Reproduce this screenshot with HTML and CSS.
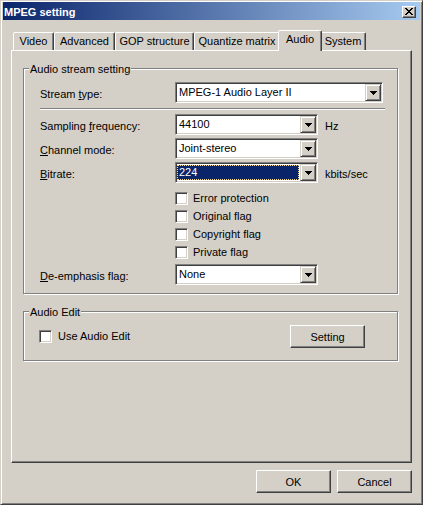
FILE: index.html
```html
<!DOCTYPE html>
<html>
<head>
<meta charset="utf-8">
<link rel="stylesheet" href="styles.css">
</head>
<body>
<div class="window">
  <div class="titlebar">
    <span class="title">MPEG setting</span>
    <span class="close-btn">
      <svg width="8" height="7" viewBox="0 0 8 7" shape-rendering="crispEdges"><path d="M0 0h2v1H0zM6 0h2v1H6zM1 1h2v1H1zM5 1h2v1H5zM2 2h4v1H2zM3 3h2v1H3zM2 4h4v1H2zM1 5h2v1H1zM5 5h2v1H5zM0 6h2v1H0zM6 6h2v1H6z" fill="#000"/></svg>
    </span>
  </div>
  <div class="client">
    <div class="tabs">
      <div class="tab tab-video">Video</div>
      <div class="tab tab-advanced">Advanced</div>
      <div class="tab tab-gop">GOP structure</div>
      <div class="tab tab-quantize">Quantize matrix</div>
      <div class="tab tab-audio tab-selected">Audio</div>
      <div class="tab tab-system">System</div>
    </div>
    <div class="panel">
      <div class="group group-stream">
        <div class="group-title">Audio stream setting</div>
        <div class="field-row row-stream">
          <span class="field-label">Stream <u>t</u>ype:</span>
          <div class="combo combo-wide">
            <span class="combo-value">MPEG-1 Audio Layer II</span>
            <span class="combo-btn"><svg width="7" height="4" viewBox="0 0 7 4" shape-rendering="crispEdges"><path d="M0 0h7v1H0zM1 1h5v1H1zM2 2h3v1H2zM3 3h1v1H3z" fill="#000"/></svg></span>
          </div>
        </div>
        <div class="separator"></div>
        <div class="field-row row-after-sep">
          <span class="field-label">Sampling <u>f</u>requency:</span>
          <div class="combo">
            <span class="combo-value">44100</span>
            <span class="combo-btn"><svg width="7" height="4" viewBox="0 0 7 4" shape-rendering="crispEdges"><path d="M0 0h7v1H0zM1 1h5v1H1zM2 2h3v1H2zM3 3h1v1H3z" fill="#000"/></svg></span>
          </div>
          <span class="unit">Hz</span>
        </div>
        <div class="field-row">
          <span class="field-label"><u>C</u>hannel mode:</span>
          <div class="combo">
            <span class="combo-value">Joint-stereo</span>
            <span class="combo-btn"><svg width="7" height="4" viewBox="0 0 7 4" shape-rendering="crispEdges"><path d="M0 0h7v1H0zM1 1h5v1H1zM2 2h3v1H2zM3 3h1v1H3z" fill="#000"/></svg></span>
          </div>
        </div>
        <div class="field-row">
          <span class="field-label"><u>B</u>itrate:</span>
          <div class="combo combo-focus">
            <span class="combo-value">224</span>
            <span class="combo-btn"><svg width="7" height="4" viewBox="0 0 7 4" shape-rendering="crispEdges"><path d="M0 0h7v1H0zM1 1h5v1H1zM2 2h3v1H2zM3 3h1v1H3z" fill="#000"/></svg></span>
          </div>
          <span class="unit">kbits/sec</span>
        </div>
        <div class="checks">
          <div class="check-row"><span class="check"></span><span class="check-text">Error protection</span></div>
          <div class="check-row"><span class="check"></span><span class="check-text">Original flag</span></div>
          <div class="check-row"><span class="check"></span><span class="check-text">Copyright flag</span></div>
          <div class="check-row"><span class="check"></span><span class="check-text">Private flag</span></div>
        </div>
        <div class="field-row row-deemph">
          <span class="field-label"><u>D</u>e-emphasis flag:</span>
          <div class="combo">
            <span class="combo-value">None</span>
            <span class="combo-btn"><svg width="7" height="4" viewBox="0 0 7 4" shape-rendering="crispEdges"><path d="M0 0h7v1H0zM1 1h5v1H1zM2 2h3v1H2zM3 3h1v1H3z" fill="#000"/></svg></span>
          </div>
        </div>
      </div>
      <div class="group group-edit">
        <div class="group-title">Audio Edit</div>
        <div class="edit-row">
          <div class="check-row check-row-edit"><span class="check"></span><span class="check-text">Use Audio Edit</span></div>
          <button class="btn btn-setting">Setting</button>
        </div>
      </div>
    </div>
    <div class="buttons">
      <button class="btn">OK</button>
      <button class="btn">Cancel</button>
    </div>
  </div>
</div>
</body>
</html>
```
FILE: styles.css
```css
body {
  margin: 0;
  font-family: "Liberation Sans", Arial, sans-serif;
  font-size: 11px;
  color: #000;
  background: #D4D0C8;
}

.window {
  width: 423px;
  height: 505px;
  box-sizing: border-box;
  border: 1px solid;
  border-color: #D4D0C8 #404040 #404040 #D4D0C8;
  box-shadow: inset 1px 1px #fff, inset -1px -1px #808080;
  padding: 1px 2px 2px 2px;
  background: #D4D0C8;
  display: flex;
  flex-direction: column;
}

.titlebar {
  height: 18px;
  flex: none;
  display: flex;
  align-items: center;
  justify-content: space-between;
  padding: 0 4px 0 1px;
  background: linear-gradient(90deg, #0A246A, #A6CAF0);
  color: #fff;
  font-weight: bold;
}

.title {
  line-height: 13px;
  padding-top: 2px;
}

.close-btn {
  width: 14px;
  height: 12px;
  box-sizing: border-box;
  background: #D4D0C8;
  border: 1px solid;
  border-color: #fff #404040 #404040 #fff;
  box-shadow: inset -1px -1px #808080;
  display: flex;
  align-items: center;
  justify-content: center;
  margin-top: 1px;
}

.close-btn svg {
  display: block;
}

.client {
  flex: 1;
  padding: 10px 8px 0 8px;
  display: flex;
  flex-direction: column;
}

.tabs {
  display: flex;
  align-items: flex-end;
  height: 20px;
  padding-left: 2px;
}

.tab {
  box-sizing: border-box;
  height: 18px;
  flex: none;
  border: 1px solid;
  border-bottom: 0;
  border-color: #fff #404040 transparent #fff;
  box-shadow: inset -1px 0 #808080;
  border-radius: 2px 2px 0 0;
  text-align: center;
  padding-top: 2px;
  line-height: 13px;
  background: #D4D0C8;
}

.tab-selected {
  height: 21px;
  margin: 0 -2px -1px -2px;
  position: relative;
  z-index: 1;
}

.tab-video { width: 41px; }
.tab-advanced { width: 61px; }
.tab-gop { width: 79px; }
.tab-quantize { width: 86px; }
.tab-audio { width: 44px; }
.tab-system { width: 46px; }

.panel {
  height: 413px;
  box-sizing: border-box;
  flex: none;
  border: 1px solid;
  border-color: #fff #404040 #404040 #fff;
  box-shadow: inset -1px -1px #808080;
  padding-top: 17px;
}

.group {
  margin: 0 13px 0 11px;
  border: 1px solid #808080;
  box-shadow: inset 1px 1px #fff, 1px 1px #fff;
}

.group-stream {
  padding: 0 12px 8px 16px;
}

.group-edit {
  margin-top: 17px;
  padding: 0 32px 12px 15px;
}

.group-title {
  width: max-content;
  margin: -6px 0 0 -11px;
  padding: 0 1px;
  background: #D4D0C8;
  line-height: 13px;
}

.group-edit .group-title {
  margin-left: -10px;
}

.field-row {
  display: flex;
  align-items: center;
  height: 21px;
  margin-top: 3px;
}

.row-stream { margin-top: 6px; }
.row-after-sep { margin-top: 4px; }
.row-deemph { margin-top: 5px; }

.separator {
  margin-top: 5px;
  border-top: 1px solid #808080;
  border-bottom: 1px solid #fff;
}

.field-label {
  width: 135px;
  flex: none;
  padding-top: 3px;
  line-height: 13px;
}

.unit {
  margin-left: 7px;
  padding-top: 3px;
  line-height: 13px;
}

.combo {
  display: flex;
  box-sizing: border-box;
  height: 21px;
  width: 143px;
  flex: none;
  border: 1px solid;
  border-color: #808080 #fff #fff #808080;
  box-shadow: inset 1px 1px #404040, inset -1px -1px #D4D0C8;
  padding: 1px;
  background: #fff;
}

.combo-wide {
  width: 208px;
}

.combo-value {
  flex: 1;
  line-height: 17px;
  padding-left: 2px;
  white-space: nowrap;
  overflow: hidden;
}

.combo-focus .combo-value {
  margin: 1px 1px 1px 0;
  padding-left: 1px;
  line-height: 13px;
  background: #0A246A;
  color: #fff;
  border: 1px dotted #F5DB95;
}

.combo-btn {
  width: 16px;
  height: 17px;
  box-sizing: border-box;
  flex: none;
  background: #D4D0C8;
  border: 1px solid;
  border-color: #D4D0C8 #404040 #404040 #D4D0C8;
  box-shadow: inset 1px 1px #fff, inset -1px -1px #808080;
  display: flex;
  align-items: center;
  justify-content: center;
}

.combo-btn svg {
  display: block;
}

.checks {
  margin: 9px 0 0 135px;
  display: flex;
  flex-direction: column;
  gap: 5px;
}

.check-row {
  display: flex;
  align-items: center;
  gap: 5px;
  height: 13px;
}

.check-row-edit {
  gap: 6px;
}

.check {
  width: 13px;
  height: 13px;
  box-sizing: border-box;
  flex: none;
  background: #fff;
  border: 1px solid;
  border-color: #808080 #fff #fff #808080;
  box-shadow: inset 1px 1px #404040, inset -1px -1px #D4D0C8;
}

.check-text {
  line-height: 13px;
}

.edit-row {
  display: flex;
  align-items: center;
  height: 23px;
  margin-top: 6px;
}

.btn {
  width: 75px;
  height: 23px;
  box-sizing: border-box;
  border: 1px solid;
  border-color: #fff #404040 #404040 #fff;
  box-shadow: inset -1px -1px #808080;
  background: #D4D0C8;
  font: inherit;
  color: #000;
  padding: 0;
  display: flex;
  align-items: center;
  justify-content: center;
  border-radius: 0;
}

.btn-setting {
  margin-left: auto;
}

.buttons {
  display: flex;
  justify-content: flex-end;
  gap: 6px;
  margin-top: 7px;
}
```
